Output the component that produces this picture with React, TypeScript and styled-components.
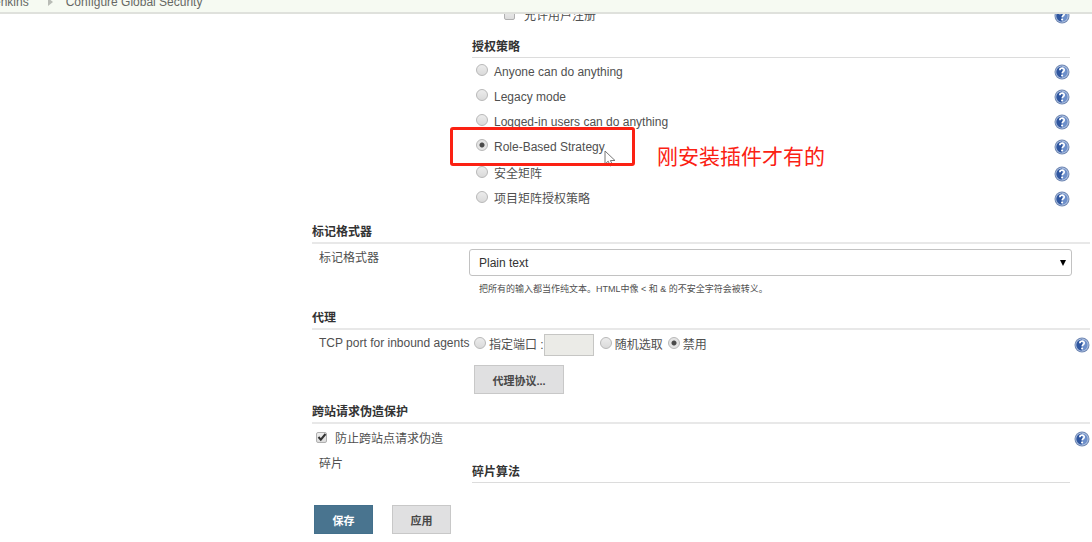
import React from "react";
import styled, { createGlobalStyle, css } from "styled-components";

const GlobalStyle = createGlobalStyle`
  * { box-sizing: border-box; }
  body {
    margin: 0;
    background: #fff;
    color: #505050;
    font: 12px/16px "Liberation Sans", "Noto Sans CJK SC", sans-serif;
  }
  button, input, select { font-family: inherit; margin: 0; }
`;

const TopBar = styled.header`
  display: flex;
  align-items: flex-end;
  height: 14px;
  padding-bottom: 2px;
  background: #f6faf2;
  border-bottom: 2px solid #dfe1dc;
`;

const Breadcrumbs = styled.nav`
  display: flex;
  align-items: center;
  margin-left: -12px;
`;

const Crumb = styled.a`
  color: #666864;
  text-decoration: none;
`;

const CrumbArrow = styled.svg`
  width: 5px;
  height: 8px;
  margin: 0 13px 0 19px;
`;

const Page = styled.main`
  padding: 0 2px 9px 312px;
`;

const Nested = styled.div`
  padding: 0 20px 0 160px;
`;

const ClippedRow = styled.div`
  display: flex;
  align-items: flex-end;
  justify-content: space-between;
  height: 10px;
  padding-left: 32px;
  overflow: hidden;
`;

const Section = styled.section<{ $gap: number }>`
  margin-top: ${(p) => p.$gap}px;
`;

const heading = css`
  margin: 0;
  padding-bottom: 2px;
  font-size: 12px;
  line-height: 16px;
  font-weight: bold;
  color: #333;
`;

const SectionTitle = styled.h2`
  ${heading}
  border-bottom: 2px solid #e8e8e8;
`;

const SubTitle = styled.h3`
  ${heading}
  border-bottom: 1px solid #dcdcdc;
`;

const OptionGroup = styled.div<{ $top: number }>`
  padding: ${(p) => p.$top}px 0 0 4px;
`;

const OptionRow = styled.div`
  position: relative;
  display: flex;
  align-items: center;
  justify-content: space-between;
  height: 25px;
`;

const Choice = styled.label<{ $gap: number }>`
  display: flex;
  align-items: center;
  gap: ${(p) => p.$gap}px;
  white-space: nowrap;
`;

const Radio = styled.input.attrs({ type: "radio" })`
  appearance: none;
  flex: none;
  width: 12px;
  height: 12px;
  margin-bottom: 4px;
  border: 1px solid #b8b8b8;
  border-radius: 50%;
  background: linear-gradient(#ececec, #dadada);
  &:checked {
    background: radial-gradient(circle, #4a4a4a 0 2px, #e4e4e4 3px);
  }
`;

const Checkbox = styled.input.attrs({ type: "checkbox" })`
  appearance: none;
  flex: none;
  width: 11px;
  height: 11px;
  margin-bottom: 4px;
  border: 1px solid #b0b0b0;
  border-radius: 2px;
  background: linear-gradient(#eee, #dcdcdc);
`;

const TickBox = styled.span`
  position: relative;
  display: flex;
  svg {
    position: absolute;
    top: 0;
    left: 1px;
    width: 10px;
    height: 10px;
    visibility: hidden;
    pointer-events: none;
  }
  input:checked + svg { visibility: visible; }
`;

const HelpButton = styled.button`
  display: block;
  flex: none;
  width: 16px;
  height: 16px;
  padding: 0;
  border: 0;
  background: none;
  svg { display: block; }
`;

const Highlight = styled.div`
  position: absolute;
  left: -26px;
  top: -7px;
  width: 185px;
  height: 39px;
  border: 3px solid #fb2113;
  border-radius: 3px;
  pointer-events: none;
`;

const Pointer = styled.svg`
  position: absolute;
  left: 128px;
  top: 16px;
  width: 13px;
  height: 17px;
`;

const Note = styled.div`
  position: absolute;
  left: 181px;
  top: 9px;
  color: #fb2113;
  font-size: 21px;
  line-height: 28px;
  white-space: nowrap;
`;

const Field = styled.div<{ $top: number }>`
  display: grid;
  grid-template-columns: 150px minmax(0, 1fr);
  padding: ${(p) => p.$top}px 0 0 7px;
`;

const FieldName = styled.span`
  padding-top: 1px;
  white-space: nowrap;
`;

const SelectBox = styled.div`
  position: relative;
  padding-right: 18px;
  svg {
    position: absolute;
    right: 24px;
    top: 10px;
    width: 6px;
    height: 7px;
    pointer-events: none;
  }
`;

const Select = styled.select`
  appearance: none;
  display: block;
  width: 100%;
  height: 27px;
  padding: 0 9px;
  border: 1px solid #c2c2c2;
  border-radius: 3px;
  background: #fff;
  color: #333;
  font-size: 12px;
`;

const Hint = styled.p`
  margin: 7px 0 0 10px;
  font-size: 9px;
  line-height: 12px;
`;

const InlineRow = styled.div`
  display: flex;
  align-items: center;
  height: 22px;
  padding-left: 5px;
`;

const PortInput = styled.input`
  width: 50px;
  height: 22px;
  margin-right: 6px;
  border: 1px solid #c6c6c4;
  background: #ebebe7;
`;

const Spacer = styled.span<{ $grow?: boolean }>`
  width: 5px;
  flex: ${(p) => (p.$grow ? "1" : "none")};
`;

const Button = styled.button<{ $primary?: boolean; $wide?: boolean }>`
  display: block;
  width: ${(p) => (p.$wide ? 90 : 59)}px;
  height: 29px;
  padding: 0;
  border: 1px solid ${(p) => (p.$primary ? "#43708c" : "#c8c8c8")};
  background: ${(p) => (p.$primary ? "#49748f" : "#e0e0e1")};
  color: ${(p) => (p.$primary ? "#fff" : "#484848")};
  font-size: 11px;
  font-weight: bold;
`;

const ButtonIndent = styled.div`
  padding: 9px 0 0 5px;
`;

const CheckRow = styled.div`
  display: flex;
  align-items: center;
  justify-content: space-between;
  height: 26px;
  padding: 4px 0 0 4px;
`;

const SubField = styled.div`
  padding: 9px 20px 0 3px;
`;

const Actions = styled.div`
  display: flex;
  gap: 19px;
  padding: 22px 0 0 2px;
`;

function Help({ topic }: { topic: string }) {
  return (
    <HelpButton type="button" aria-label={`Help: ${topic}`}>
      <svg width="16" height="16" viewBox="0 0 16 16">
        <circle cx="8" cy="8" r="7.5" fill="#7189b4" />
        <circle cx="8" cy="8" r="6.5" fill="#b3c4e2" />
        <circle cx="8" cy="8" r="5.6" fill="#6d8fca" />
        <path d="M8 2.400a5.600 5.600 0 0 0 0 11.200c1-2-1-3.500 0-5.600s-1-3.600 0-5.600z" fill="#2f569f" />
        <path d="M5.900 6.200C5.900 3.500 10.200 3.600 10.200 6c0 1.600-2 1.600-2 3.300" fill="none" stroke="#fff" strokeWidth="1.700" />
        <circle cx="8.100" cy="11.500" r="1.100" fill="#fff" />
      </svg>
    </HelpButton>
  );
}

const strategies = [
  "Anyone can do anything",
  "Legacy mode",
  "Logged-in users can do anything",
  "Role-Based Strategy",
];
const matrixStrategies = ["安全矩阵", "项目矩阵授权策略"];

function StrategyOption({ name, marked }: { name: string; marked?: boolean }) {
  return (
    <OptionRow>
      <Choice $gap={6}>
        <Radio name="strategy" defaultChecked={marked} />
        {name}
      </Choice>
      {marked && (
        <>
          <Pointer viewBox="0 0 13 17" aria-hidden="true">
            <path d="M1 1v13l3.200-2.800 2.200 4.800 2.200-1-2.200-4.500h4.600z" fill="#fff" stroke="#777" />
          </Pointer>
          <Highlight />
          <Note>刚安装插件才有的</Note>
        </>
      )}
      <Help topic={name} />
    </OptionRow>
  );
}

export default function App() {
  return (
    <>
      <GlobalStyle />
      <TopBar>
        <Breadcrumbs>
          <Crumb href="#">Jenkins</Crumb>
          <CrumbArrow viewBox="0 0 5 8" aria-hidden="true">
            <path d="M0 0l5 4-5 4z" fill="#b9bcb6" />
          </CrumbArrow>
          <Crumb href="#">Configure Global Security</Crumb>
        </Breadcrumbs>
      </TopBar>
      <Page>
        <Nested>
          <ClippedRow>
            <Choice $gap={9}>
              <Checkbox />
              允许用户注册
            </Choice>
            <Help topic="允许用户注册" />
          </ClippedRow>
          <Section $gap={15}>
            <SubTitle>授权策略</SubTitle>
            <OptionGroup $top={1}>
              {strategies.map((s) => (
                <StrategyOption key={s} name={s} marked={s === "Role-Based Strategy"} />
              ))}
            </OptionGroup>
            <OptionGroup $top={2}>
              {matrixStrategies.map((s) => (
                <StrategyOption key={s} name={s} />
              ))}
            </OptionGroup>
          </Section>
        </Nested>

        <Section $gap={13}>
          <SectionTitle>标记格式器</SectionTitle>
          <Field $top={5}>
            <FieldName as="label" htmlFor="formatter">标记格式器</FieldName>
            <div>
              <SelectBox>
                <Select id="formatter">
                  <option>Plain text</option>
                </Select>
                <svg viewBox="0 0 6 7" aria-hidden="true">
                  <path d="M0 1h6L3 7z" fill="#000" />
                </svg>
              </SelectBox>
              <Hint>把所有的输入都当作纯文本。HTML中像 &lt; 和 &amp; 的不安全字符会被转义。</Hint>
            </div>
          </Field>
        </Section>

        <Section $gap={15}>
          <SectionTitle>代理</SectionTitle>
          <Field $top={4}>
            <FieldName>TCP port for inbound agents</FieldName>
            <div>
              <InlineRow>
                <Choice $gap={3}>
                  <Radio name="port" />
                  指定端口 :
                </Choice>
                <PortInput aria-label="端口" disabled />
                <Choice $gap={3}>
                  <Radio name="port" />
                  随机选取
                </Choice>
                <Spacer />
                <Choice $gap={3}>
                  <Radio name="port" defaultChecked />
                  禁用
                </Choice>
                <Spacer $grow />
                <Help topic="TCP port" />
              </InlineRow>
              <ButtonIndent>
                <Button type="button" $wide>代理协议...</Button>
              </ButtonIndent>
            </div>
          </Field>
        </Section>

        <Section $gap={10}>
          <SectionTitle>跨站请求伪造保护</SectionTitle>
          <CheckRow>
            <Choice $gap={8}>
              <TickBox>
                <Checkbox defaultChecked />
                <svg viewBox="0 0 10 10" aria-hidden="true">
                  <path d="M1.500 5l2.300 2.700L8.500 2" fill="none" stroke="#333" strokeWidth="2" />
                </svg>
              </TickBox>
              防止跨站点请求伪造
            </Choice>
            <Help topic="防止跨站点请求伪造" />
          </CheckRow>
          <Field $top={5}>
            <FieldName>碎片</FieldName>
            <SubField>
              <SubTitle>碎片算法</SubTitle>
            </SubField>
          </Field>
        </Section>

        <Actions>
          <Button type="submit" $primary>保存</Button>
          <Button type="button">应用</Button>
        </Actions>
      </Page>
    </>
  );
}
